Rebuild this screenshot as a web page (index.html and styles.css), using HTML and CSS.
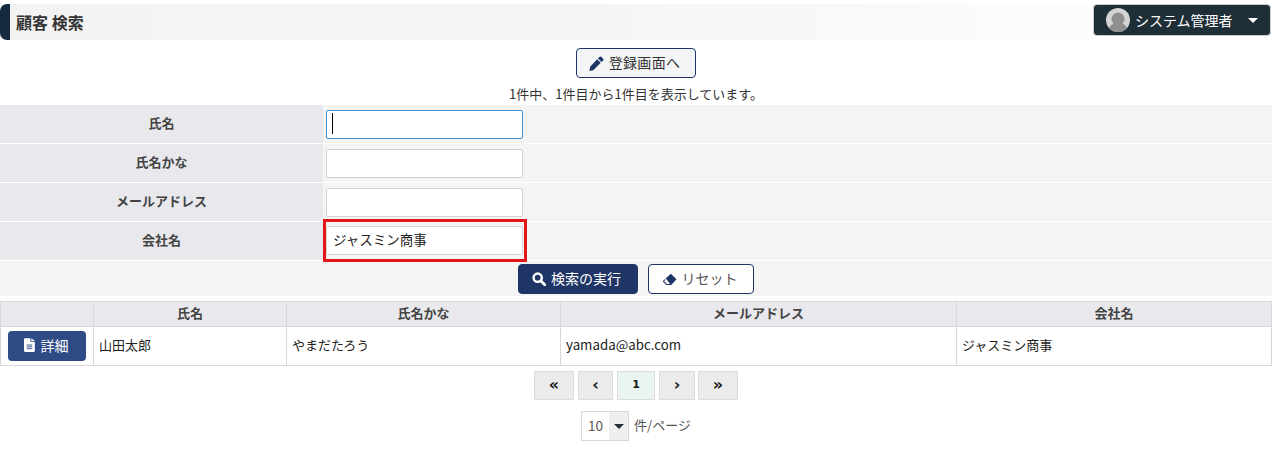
FILE: index.html
```html
<!DOCTYPE html>
<html lang="ja">
<head>
<meta charset="utf-8">
<title>顧客 検索</title>
<link rel="stylesheet" href="styles.css">
</head>
<body>
<header class="top">
  <h1 class="title">顧客 検索</h1>
  <button class="user" type="button">
    <svg class="avatar" viewBox="0 0 24 24" width="24" height="24"><circle cx="12" cy="12" r="12" fill="#d4d4d4"/><path d="M3 20c2-4 5-5 9-5s7 1 9 5a12 12 0 0 1-18 0z" fill="#8f8f8f"/><circle cx="12" cy="11" r="6.5" fill="#8f8f8f"/></svg>
    <span>システム管理者</span>
    <i class="caret"></i>
  </button>
</header>
<div class="register-row">
  <button class="btn btn-outline btn-register" type="button">
    <svg viewBox="0 0 16 16" width="15" height="15"><path d="M11.3.9a1.2 1.2 0 0 1 1.7 0l2.1 2.1a1.2 1.2 0 0 1 0 1.7l-1.700 1.700-3.800-3.800zM8.700 3.500l3.800 3.800-7.900 7.900-4.200.8.8-4.600z" fill="#1f3566"/></svg>
    登録画面へ
  </button>
</div>
<p class="count">1件中、1件目から1件目を表示しています。</p>
<form class="search">
  <div class="row"><label class="label">氏名</label><div class="field"><input class="input input-focus" type="text"><i class="cursor"></i></div></div>
  <div class="row"><label class="label">氏名かな</label><div class="field"><input class="input" type="text"></div></div>
  <div class="row"><label class="label">メールアドレス</label><div class="field"><input class="input" type="text"></div></div>
  <div class="row"><label class="label">会社名</label><div class="field field-marked"><input class="input input-filled" type="text" value="ジャスミン商事"><i class="mark"></i></div></div>
  <div class="actions">
    <button class="btn btn-solid btn-search" type="button">
      <svg viewBox="0 0 16 16" width="14" height="14"><circle cx="6.5" cy="6.5" r="4.7" fill="none" stroke="#fff" stroke-width="2.8"/><path d="M10 10l4.600 4.600" stroke="#fff" stroke-width="3.200" stroke-linecap="round"/></svg>
      検索の実行
    </button>
    <button class="btn btn-outline btn-reset" type="button">
      <svg viewBox="0 0 16 14" width="15" height="13"><path d="M9.500.8l6 6-5.600 6.200H4.600L.6 9z" fill="#1f3566"/><path d="M4.200 6L8.600 11.800H5.100L2.300 8.800z" fill="#fff"/></svg>
      リセット
    </button>
  </div>
</form>
<table class="results">
  <colgroup><col class="c1"><col class="c2"><col class="c3"><col class="c4"><col></colgroup>
  <thead><tr><th></th><th>氏名</th><th>氏名かな</th><th>メールアドレス</th><th>会社名</th></tr></thead>
  <tbody>
    <tr>
      <td class="cell-btn"><button class="btn-detail" type="button">
        <svg viewBox="0 0 12 15" width="11" height="14"><path d="M0 1.200A1.200 1.200 0 0 1 1.200 0H7v4h4.800v9.800a1.200 1.200 0 0 1-1.200 1.200H1.200A1.200 1.200 0 0 1 0 13.800z" fill="#fff"/><path d="M8 0l4 3.200H8z" fill="#fff"/><path d="M3 7.500h6M3 9.500h6M3 11.500h6" stroke="#2f4b85" stroke-width="1"/></svg>
        詳細</button></td>
      <td>山田太郎</td><td>やまだたろう</td><td class="cell-mail">yamada@abc.com</td><td>ジャスミン商事</td>
    </tr>
  </tbody>
</table>
<nav class="pager">
  <span class="page page-wide">«</span>
  <span class="page">‹</span>
  <span class="page page-current">1</span>
  <span class="page page-next">›</span>
  <span class="page page-wide page-last">»</span>
</nav>
<div class="per-page">
  <div class="select"><span class="select-value">10</span><span class="select-arrow"><i class="caret caret-dark"></i></span></div>
  <span class="per-page-text">件/ページ</span>
</div>
</body>
</html>
```
FILE: styles.css
```css
* { box-sizing: border-box; }
html, body { margin: 0; padding: 0; }
body {
  background: #fff;
  color: #333;
  font-family: "Noto Sans CJK JP", "Noto Sans", sans-serif;
  font-size: 13px;
  line-height: 1.2;
  height: 449px;
  overflow: hidden;
}
button { font-family: inherit; cursor: pointer; }
.top {
  display: flex;
  justify-content: space-between;
  align-items: flex-start;
  padding: 4px 1px 0 0;
  height: 40px;
}
.title {
  flex: 1;
  margin: 0;
  height: 36px;
  background: linear-gradient(to right, #f3f3f3, #f6f6f6 60%, #fcfcfc);
  border-left: 10px solid #17293f;
  border-radius: 7px 0 0 7px;
  padding-left: 6px;
  font-size: 16px;
  line-height: 36px;
  font-weight: 700;
  color: #333;
}
.user {
  width: 178px;
  height: 32px;
  background: #1f2f38;
  border: 1px solid #cfcfcf;
  border-radius: 4px;
  color: #fff;
  display: flex;
  align-items: center;
  padding: 0 12px;
  font-size: 14px;
  margin: 0;
}
.avatar { margin-right: 5px; flex: none; }
.user span { flex: 1; text-align: left; white-space: nowrap; }
.caret {
  display: block;
  width: 0;
  height: 0;
  border-left: 5px solid transparent;
  border-right: 5px solid transparent;
  border-top: 5px solid #fff;
}
.caret-dark { border-top-color: #1f2f38; }
.btn {
  display: inline-flex;
  align-items: center;
  justify-content: center;
  gap: 5px;
  height: 30px;
  border-radius: 4px;
  font-size: 14px;
  padding: 0 3px 3px 0;
  margin: 0;
}
.btn svg { margin-top: 3px; }
.btn-outline { background: #fff; border: 1px solid #1f3566; color: #555; }
.btn-solid { background: #1f3566; border: 1px solid #1f3566; color: #fff; }
.register-row { display: flex; justify-content: center; padding-top: 8px; height: 38px; }
.btn-register { width: 120px; background: #f4f5f6; color: #333; letter-spacing: 0.3px; }
.count { margin: 0; height: 27px; padding-top: 7px; text-align: center; font-size: 13px; line-height: 17px; }
.search { display: block; background: #f4f4f4; }
.row { display: flex; height: 39px; border-bottom: 1px solid #fff; }
.label {
  width: 323px;
  background: #e9e9ed;
  text-align: center;
  font-weight: 700;
  font-size: 13px;
  line-height: 35px;
  color: #444;
}
.field { padding: 5px 0 0 3px; position: relative; }
.field-marked { padding-top: 4px; }
.input {
  display: block;
  width: 197px;
  height: 29px;
  border: 1px solid #d2d2d2;
  border-radius: 2px;
  background: #fff;
  padding: 0 6px;
  font-family: inherit;
  font-size: 13.500px;
  color: #222;
  outline: none;
}
.input-filled { padding-bottom: 3px; }
.input-focus { border-color: #3f93d0; }
.cursor { position: absolute; left: 9px; top: 8px; width: 1px; height: 21px; background: #000; }
.mark { position: absolute; left: 0; top: -3px; width: 204px; height: 43px; border: 3px solid #e3161c; pointer-events: none; }
.actions { display: flex; justify-content: center; gap: 10px; height: 35px; padding-top: 3px; background: #f4f4f4; }
.btn-search { width: 120px; }
.btn-reset { width: 106px; }
.results {
  width: 100%;
  margin-top: 5px;
  border-collapse: collapse;
  table-layout: fixed;
  border: 1px solid #d8d8d8;
  font-size: 13px;
}
.results .c1 { width: 93px; }
.results .c2 { width: 193px; }
.results .c3 { width: 274px; }
.results .c4 { width: 396px; }
.results th, .results td { border: 1px solid #d8d8d8; }
.results th { height: 25px; background: #e9e9ed; font-weight: 700; font-size: 13px; color: #444; padding: 0 0 2px; }
.results td { height: 39px; padding: 0 5px 3px; color: #222; }
.results .cell-mail { font-size: 13.300px; }
.results .cell-btn { padding: 0 7px; }
.btn-detail {
  display: flex;
  align-items: center;
  justify-content: center;
  gap: 6px;
  width: 78px;
  height: 30px;
  background: #2f4b85;
  border: 0;
  border-radius: 4px;
  color: #fff;
  font-size: 14px;
  padding: 0 2px 2px 0;
}
.pager { display: flex; justify-content: center; gap: 4px; margin-top: 5px; height: 30px; }
.page {
  width: 35px;
  height: 29px;
  background: #ebebeb;
  border: 1px solid #dcdcdc;
  text-align: center;
  font-family: "DejaVu Sans", sans-serif;
  font-weight: 700;
  font-size: 16px;
  line-height: 25px;
  color: #1a1a1a;
}
.page-next { width: 36px; }
.page-wide { width: 40px; }
.page-last { margin-left: -1px; }
.page-current { width: 38px; background: #eaf4f2; font-size: 11px; }
.per-page { display: flex; justify-content: center; align-items: center; gap: 5px; margin-top: 10px; color: #555; }
.per-page-text { padding-bottom: 2px; }
.select { display: flex; width: 48px; height: 30px; border: 1px solid #d8d8d8; }
.select-value { width: 27px; text-align: center; line-height: 26px; font-size: 13.500px; }
.select-arrow { flex: 1; background: #efefef; display: flex; align-items: center; justify-content: center; }
```
